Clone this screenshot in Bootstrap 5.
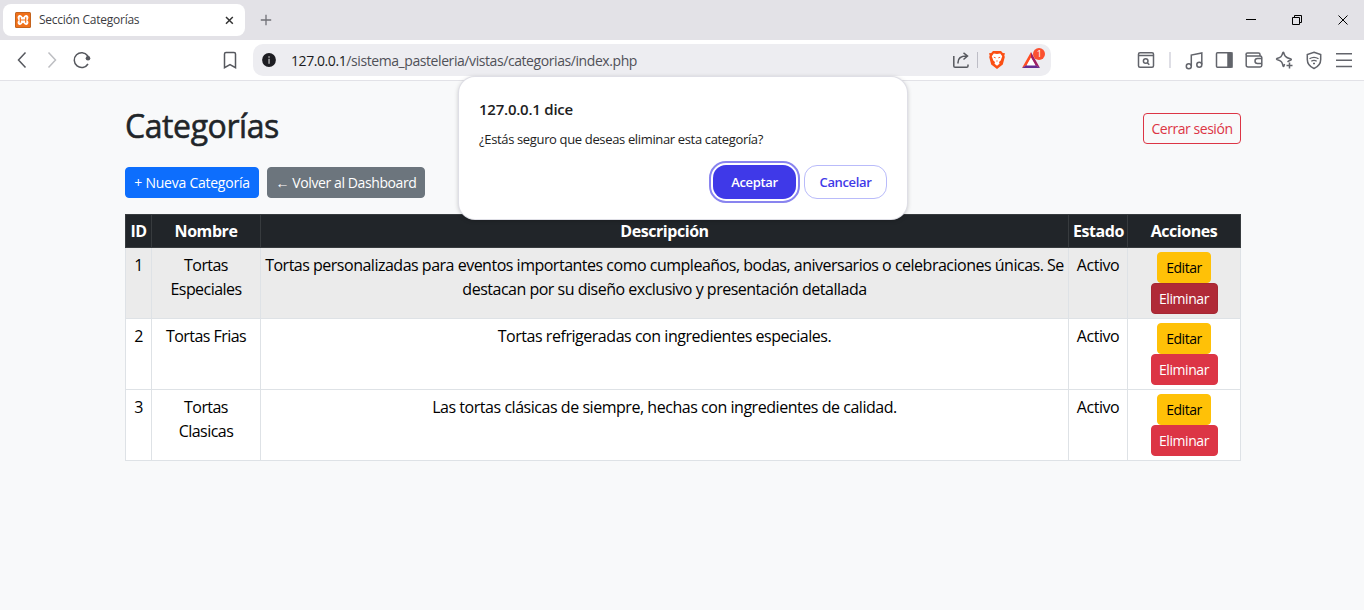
<!DOCTYPE html>
<html lang="es">
<head>
<meta charset="utf-8">
<title>Sección Categorías</title>
<link href="https://cdn.jsdelivr.net/npm/bootstrap@5.3.0/dist/css/bootstrap.min.css" rel="stylesheet">
<style>
body{font-family:"Open Sans","Noto Sans",sans-serif;height:610px;overflow:hidden;background:#f8f9fa;letter-spacing:-.38px}
svg{display:block;flex:none}
.tabstrip{height:40px;background:#e3e2e7}
.browser-tab{width:242px;height:32px;margin:4px 0 0 3px;border-radius:8px;background:#fff;padding:0 10px 0 12px;font-size:12px;color:#3b3c42;letter-spacing:-.25px}
.tab-label{width:186px;margin-left:8px}
.new-tab{margin:14px 0 0 15px}
.toolbar{height:41px;background:#fff;border-bottom:1px solid #e2e2e7}
.address{width:798px;height:32px;background:#ededf1;border-radius:10px;font-size:14px;color:#505158;letter-spacing:-.42px}
.address b{font-weight:400;color:#1b1b20}
.url-text{margin-left:14px}
.dialog{position:absolute;left:459px;top:77px;width:448px;height:142px;background:#fff;border-radius:16px;box-shadow:0 0 0 1px #dfdfe6,0 1px 5px rgba(0,0,0,.28);padding:21px 20px 20px;z-index:5}
.dialog h2{font-size:15px;line-height:22px;margin:0 0 10px;font-weight:600;color:#1d1d22;letter-spacing:-.24px}
.dialog p{font-size:13px;line-height:18px;margin:0;color:#222;letter-spacing:-.35px}
.dlg-actions{gap:8px;margin-top:17px}
.dlg-btn{width:83px;height:34px;border-radius:13px;font-size:13px;font-weight:600;padding:2px 0 0;letter-spacing:-.36px}
.accept{background:#3f39e8!important;color:#fff!important;border:0;outline:2px solid #8984ef;outline-offset:2px}
.cancel{background:#fff;color:#3f39e8;border:1px solid #b9bbfa}
.page-box{width:1116px;margin:0 auto 0 125px}
.page-head{padding-top:24px;height:64px}
.page-box h1{font-size:32px;line-height:38px;letter-spacing:-.42px;color:#212529;-webkit-text-stroke:.55px #212529;padding-top:2px;margin:0}
.page-actions{margin:22px 0 16px}
.btn-sm{height:31px;padding:4px 0;text-align:center;letter-spacing:-.35px;white-space:nowrap}
.w-new{width:134px;letter-spacing:-.24px}.w-back{width:158px;letter-spacing:-.4px}.w-out{width:98px;margin-top:8px;letter-spacing:-.45px}.w-edit{width:54px;letter-spacing:-.45px}.w-del{width:67px;letter-spacing:-.42px}
.cats{table-layout:fixed;width:1116px}
.cats td,.cats th{text-align:center;white-space:nowrap;color:#000}
.cats td:not(:last-child){padding-top:5px;padding-bottom:3px;letter-spacing:-.46px}
.cats tbody tr:first-child td:nth-child(3){letter-spacing:-.493px}
.cats td:nth-child(2){letter-spacing:-.55px!important}
.cats thead th{color:#fff;letter-spacing:-.45px}
.cats .btn{display:block;margin:0 auto}
.cats tbody tr:first-child td{background:#ebebeb}
.pressed{background:#b02a37!important;border-color:#a52834!important}
</style>
<script src="https://cdn.jsdelivr.net/npm/bootstrap@5.3.0/dist/js/bootstrap.bundle.min.js"></script>
</head>
<body>
<div class="tabstrip d-flex">
  <div class="browser-tab d-flex align-items-center">
    <svg width="16" height="16" viewBox="0 0 16 16"><rect width="16" height="16" rx="1.500" fill="#b9611f"/><rect x=".8" y=".8" width="14.400" height="14.400" rx="1" fill="#f0701a"/><path d="M5 8C2.600 7.500 2.600 3.700 4.800 3.700 7 3.700 6.600 5.900 8 5.900S9 3.700 11.200 3.700C13.400 3.700 13.400 7.500 11 8 13.400 8.500 13.400 12.300 11.200 12.300 9 12.300 9.400 10.100 8 10.100S7 12.300 4.800 12.300C2.600 12.300 2.600 8.500 5 8Z" fill="#fff" stroke="#fff" stroke-width="1.200"/><path d="M5.300 5.300v5.400M10.700 5.300v5.400M5.300 8h5.400" fill="none" stroke="#f0701a" stroke-width="1.200"/></svg>
    <span class="tab-label">Sección Categorías</span>
    <svg width="9" height="9" viewBox="0 0 9 9"><path d="M1 1l6.800 6.800M7.800 1L1 7.800" stroke="#333" stroke-width="1.500"/></svg>
  </div>
  <svg class="new-tab" width="12" height="12" viewBox="0 0 12 12"><path d="M6 .8v10.400M.8 6h10.400" stroke="#707077" stroke-width="1.300"/></svg>
  <div class="d-flex ms-auto align-items-center">
    <svg width="118" height="40" viewBox="1246 0 118 40" fill="none" stroke="#000"><path d="M1246 19.500h10M1292.500 17.500h7v7h-7zM1294.500 17v-1.500h7v7h-1.500"/><path d="M1338.500 15.500l9 9m0-9l-9 9"/></svg>
  </div>
</div>
<div class="toolbar d-flex align-items-center">
  <svg width="253" height="40" viewBox="0 40 253 40" fill="none" stroke="#56585e" stroke-width="1.500"><path d="M25.500 52.500L18.500 60l7 7.500"/><path d="M48.500 52.500l7 7.500-7 7.500" stroke="#bdbec2"/><path d="M88 64a7.400 7.400 0 1 1-.4-8.300l.8 2"/><circle cx="88" cy="58.200" r="2.300" fill="#56585e" stroke="none"/><path d="M224.500 54q0-1.500 1.500-1.500h8q1.500 0 1.500 1.500v13.700l-5.500-3-5.500 3z"/></svg>
  <div class="address d-flex align-items-center">
    <svg class="ms-2" width="16" height="16" viewBox="0 0 16 16"><circle cx="8" cy="8" r="6.900" fill="#1d1d22"/><path d="M7.300 4.200h1.500v1.500H7.300zM7.300 6.800h1.500v5H7.300z" fill="#aaa"/></svg>
    <span class="url-text"><b>127.0.0.1</b>/sistema_pasteleria/vistas/categorias/index.php</span>
    <svg class="ms-auto" width="106" height="32" viewBox="945 44 106 32" fill="none">
      <g stroke="#56585e" stroke-width="1.500"><path d="M953.800 56v10q0 1.300 1.300 1.300h11.600q1.300 0 1.300-1.300v-1.500M958 63.500v-1q0-6.500 8.500-6.500M963.500 52.800l4 3.200-4 3.500"/></g>
      <path d="M977.500 52v16" stroke="#bdbdc6"/>
      <path d="M993 51h8l1.800 2 2.200.3-.7 2.200.5 1.500-2 7.500-5.800 4.500-5.800-4.500-2-7.500.5-1.500-.7-2.200 2.200-.3z" fill="#fb4f14"/>
      <path d="M993.800 53.500l3.200.6 3.200-.6 2 2.800-1.500 4.200-1.700 1.500.5 1.700-2.500 2-2.500-2 .5-1.700-1.700-1.500-1.500-4.200z" fill="#fff"/><path d="M993.800 57.200l1.900.7M1000.200 57.200l-1.900.7M996.300 61h1.400" stroke="#fb4f14" stroke-width=".9"/>
      <path d="M1031 52l-9 16 5-3 4-7z" fill="#ff4d23"/><path d="M1031 52l9 16-5-3-4-7z" fill="#9e1f63"/><path d="M1022 68h18l-4.500-3h-9z" fill="#662d91"/><path d="M1031 57.500l4.500 8h-9z" fill="#fff"/>
      <circle cx="1039" cy="54" r="6" fill="#fb5030"/><text x="1036.700" y="57.200" font-size="9" fill="#fff">1</text>
    </svg>
  </div>
  <svg class="ms-auto" width="234" height="40" viewBox="1130 40 234 40" fill="none" stroke="#62646b" stroke-width="1.500">
    <rect x="1138.500" y="52.700" width="15" height="14.500" rx="1.500"/><path d="M1138.500 55.500h15"/><circle cx="1145.700" cy="61" r="2.300"/><path d="M1147.300 62.700l2 2"/>
    <path d="M1170 52v16" stroke="#dedee5" stroke-width="2"/>
    <path d="M1191.300 66v-11l10.500-2v11.500"/><circle cx="1188.800" cy="66.300" r="2.500"/><circle cx="1199.300" cy="64.800" r="2.500"/>
    <rect x="1216.500" y="52.700" width="15" height="14.500" rx="1"/><path d="M1228 53h4v14h-4z" fill="#62646b"/>
    <path d="M1260 55.500v-1q0-1.500-1.500-1.500h-11q-1.500 0-1.500 1.500t1.500 1.500h12.500q1.800 0 1.800 1.500v7.800q0 1.700-1.700 1.700h-12q-1.900 0-1.900-1.700V54.500M1261.700 58.500h-4.200a2.500 2.500 0 0 0 0 5h4.200"/>
    <path d="M1287.500 61.800q1.500-1.200 3.500-1.800.6-.5 0-1-4.500-1.200-5.700-2.800-1-1-1.600-3.700-.4-.7-.8 0-.8 3-2 4.200-1 1-4 1.800-.7.500 0 1 3.500 1 4.500 2.200 1 1 1.700 4.500.4.700.8 0 .3-1.300.7-2.200"/><path d="M1289.500 62.500v6M1286.500 65.500h6"/>
    <path d="M1314 52.300l6.700 2.200v5q0 6-6.700 9-6.700-3-6.700-9v-5z"/><path d="M1309.500 58.800q4.500-3 9 0M1311.300 61.300q2.700-1.700 5.400 0M1313 63.500h2" stroke-width="1.300"/>
    <path d="M1336 53.800h16M1336 60.200h16M1336 66.500h16"/>
  </svg>
</div>
<main class="page-box">
  <div class="page-head d-flex justify-content-between align-items-start">
    <h1>Categorías</h1>
    <a class="btn btn-sm btn-outline-danger w-out" href="#">Cerrar sesión</a>
  </div>
  <div class="page-actions d-flex gap-2">
    <a class="btn btn-sm btn-primary w-new" href="#">+ Nueva Categoría</a>
    <a class="btn btn-sm btn-secondary w-back" href="#">← Volver al Dashboard</a>
  </div>
  <table class="table table-bordered table-sm mb-0 cats bg-white">
    <colgroup><col style="width:26px"><col style="width:109px"><col style="width:808px"><col style="width:59px"><col style="width:113px"></colgroup>
    <thead class="table-dark"><tr><th>ID</th><th>Nombre</th><th>Descripción</th><th>Estado</th><th>Acciones</th></tr></thead>
    <tbody>
      <tr><td>1</td><td>Tortas<br>Especiales</td><td>Tortas personalizadas para eventos importantes como cumpleaños, bodas, aniversarios o celebraciones únicas. Se<br>destacan por su diseño exclusivo y presentación detallada</td><td>Activo</td><td><a class="btn btn-sm btn-warning w-edit" href="#">Editar</a><a class="btn btn-sm btn-danger w-del pressed" href="#">Eliminar</a></td></tr>
      <tr><td>2</td><td>Tortas Frias</td><td>Tortas refrigeradas con ingredientes especiales.</td><td>Activo</td><td><a class="btn btn-sm btn-warning w-edit" href="#">Editar</a><a class="btn btn-sm btn-danger w-del" href="#">Eliminar</a></td></tr>
      <tr><td>3</td><td>Tortas<br>Clasicas</td><td>Las tortas clásicas de siempre, hechas con ingredientes de calidad.</td><td>Activo</td><td><a class="btn btn-sm btn-warning w-edit" href="#">Editar</a><a class="btn btn-sm btn-danger w-del" href="#">Eliminar</a></td></tr>
    </tbody>
  </table>
</main>
<div class="dialog" role="dialog">
  <h2>127.0.0.1 dice</h2>
  <p>¿Estás seguro que deseas eliminar esta categoría?</p>
  <div class="dlg-actions d-flex justify-content-end"><button class="btn dlg-btn accept">Aceptar</button><button class="btn dlg-btn cancel">Cancelar</button></div>
</div>
</body>
</html>
